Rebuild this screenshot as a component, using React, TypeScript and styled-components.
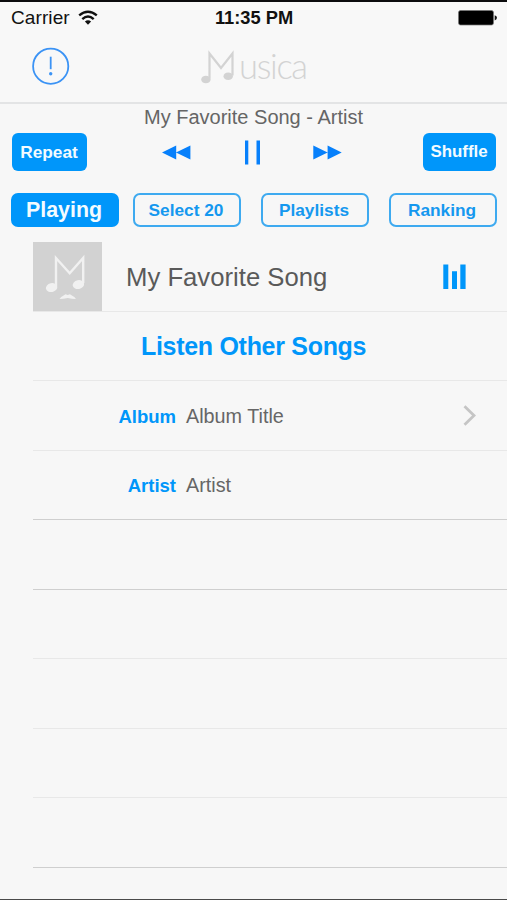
import React from "react";
import styled, { createGlobalStyle } from "styled-components";

const BLUE = "#0096fa";

const GlobalStyle = createGlobalStyle`
  * { box-sizing: border-box; }
  body { margin: 0; background: #f7f7f7; font-family: "Liberation Sans", Arial, sans-serif; }
`;

const Screen = styled.main`
  width: 507px;
  height: 900px;
  display: flex;
  flex-direction: column;
  overflow: hidden;
  background: #f7f7f7;
  border-top: 2px solid #0c0c0e;
  border-bottom: 1px solid #4a4a4a;
`;

const Header = styled.header`
  height: 102px;
  flex: none;
  background: #f8f8f8;
  border-bottom: 2px solid #e3e4e5;
`;

const StatusBar = styled.div`
  height: 32px;
  display: grid;
  grid-template-columns: 1fr 80px 1fr;
  align-items: center;
  padding: 0 10px 0 11px;
  color: #111;
`;

const Carrier = styled.div`
  display: flex;
  align-items: center;
  gap: 8px;
  font-size: 19px;
  letter-spacing: 0.1px;
`;

const Clock = styled.time`
  font-size: 18.3px;
  font-weight: 700;
  white-space: nowrap;
  text-align: center;
`;

const Battery = styled.svg`
  justify-self: end;
`;

const NavBar = styled.div`
  height: 68px;
  display: grid;
  grid-template-columns: 170px 1fr 170px;
  align-items: center;
  padding-left: 31px;
  padding-bottom: 4px;
`;

const InfoButton = styled.button`
  width: 40px;
  height: 40px;
  padding: 0;
  border: 0;
  background: none;
`;

const Brand = styled.h1`
  margin: 0;
  height: 42px;
  display: flex;
  align-items: flex-start;
  color: #d3d3d3;
  font: 300 34.5px/41px Lato, sans-serif;
  letter-spacing: -1.3px;
`;

const Icon = styled.svg`
  display: block;
  flex: none;
`;

const NowPlaying = styled.div`
  height: 29px;
  flex: none;
  line-height: 27px;
  text-align: center;
  font-size: 20px;
  color: #656565;
`;

const Controls = styled.div`
  height: 38px;
  flex: none;
  display: flex;
  align-items: center;
  justify-content: space-between;
  padding: 0 11px 0 12px;
`;

const ModeButton = styled.button<{ $width: number; $size: number }>`
  width: ${(p) => p.$width}px;
  height: 38px;
  padding: 0 1px 0 0;
  border: 0;
  border-radius: 6px;
  background: ${BLUE};
  color: #f3fbff;
  font: 700 ${(p) => p.$size}px/36px "Liberation Sans", Arial, sans-serif;
`;

const Transport = styled.div`
  display: flex;
  align-items: center;
  justify-content: space-between;
  width: 180px;
  margin-right: 6px;
`;

const Tabs = styled.nav`
  height: 34px;
  flex: none;
  display: flex;
  gap: 20px;
  margin: 22px 0 15px 11px;
`;

const Tab = styled.button<{ $active?: boolean }>`
  width: 108px;
  height: 34px;
  padding: 0 2px 0 0;
  border: 2px solid ${(p) => (p.$active ? BLUE : "#3eaaf0")};
  border-radius: 7px;
  margin-right: ${(p) => (p.$active ? -6 : 0)}px;
  background: ${(p) => (p.$active ? BLUE : "transparent")};
  color: ${(p) => (p.$active ? "#f3fbff" : "#1598ef")};
  font: 700 ${(p) => (p.$active ? 21.4 : 17.3)}px/28px "Liberation Sans", Arial, sans-serif;
`;

const List = styled.section`
  margin-left: 33px;
  display: flex;
  flex-direction: column;
`;

const Row = styled.div<{ $strong?: boolean }>`
  height: 69.5px;
  display: flex;
  align-items: center;
  border-bottom: ${(p) => (p.$strong ? "1px solid #cfcfcf" : "1px solid #e8e8e8")};
`;

const SongTitle = styled.span`
  flex: 1;
  margin-left: 24px;
  padding-top: 2px;
  font-size: 25.7px;
  color: #5a5a5a;
`;

const Equalizer = styled(Icon)`
  margin-right: 41px;
`;

const ListenLink = styled.span`
  margin-left: 108px;
  padding-top: 2px;
  font-size: 25px;
  letter-spacing: -0.3px;
  font-weight: 700;
  color: ${BLUE};
`;

const FieldLabel = styled.span`
  width: 143px;
  padding-top: 3px;
  text-align: right;
  font-size: 18.5px;
  font-weight: 700;
  color: ${BLUE};
`;

const FieldValue = styled.span`
  flex: 1;
  margin-left: 10px;
  padding-top: 2px;
  font-size: 19.8px;
  color: #666;
`;

const Chevron = styled(Icon)`
  margin-right: 31px;
`;

export default function App() {
  return (
    <>
      <GlobalStyle />
      <Screen>
        <Header>
          <StatusBar>
            <Carrier>
              Carrier
              <Icon width="20" height="16" viewBox="0 0 20 16">
                <path d="M1.2 5.4Q10-2 18.8 5.4" fill="none" stroke="#111" strokeWidth="2.4" />
                <path d="M4.3 9.1Q10 4 15.7 9.1" fill="none" stroke="#111" strokeWidth="2.4" />
                <path d="M6.9 11.5Q10 8.8 13.1 11.5L10 14.8Z" fill="#111" />
              </Icon>
            </Carrier>
            <Clock>11:35 PM</Clock>
            <Battery width="39" height="16" viewBox="0 0 39 16">
              <rect x="0.5" y="0.5" width="35" height="14.5" rx="2" fill="#000" stroke="#777" strokeWidth="0.7" />
              <path d="M36.7 5.2Q39 6 39 7.8T36.7 10.4Z" fill="#111" />
            </Battery>
          </StatusBar>
          <NavBar>
            <InfoButton aria-label="Information">
              <Icon width="40" height="40" viewBox="0 0 40 40" fill="none" stroke="#3b93f5" strokeWidth="1.8">
                <circle cx="19.7" cy="20.2" r="17.6" />
                <path d="M19.7 10.7V23.2" />
                <circle cx="19.7" cy="27.8" r="1.7" fill="#3b93f5" stroke="none" />
              </Icon>
            </InfoButton>
            <Brand aria-label="Musica">
              <Icon width="38" height="42" viewBox="0 0 38 42" fill="none" stroke="#d3d3d3" strokeWidth="2.2">
                <path d="M8.5 33.5V8.5L20 23L31.5 8.5V30.5" />
                <ellipse cx="4.9" cy="34.5" rx="4.7" ry="3.8" fill="#d3d3d3" stroke="none" />
                <ellipse cx="27.2" cy="31.3" rx="4.7" ry="3.8" fill="#d3d3d3" stroke="none" />
              </Icon>
              usica
            </Brand>
          </NavBar>
        </Header>
        <NowPlaying>My Favorite Song - Artist</NowPlaying>
        <Controls>
          <ModeButton $width={75} $size={17.3}>Repeat</ModeButton>
          <Transport>
            <Icon width="29" height="15" viewBox="0 0 29 15" fill="#0780fb">
              <path d="M0 7.5L14.2 0.5V14.5ZM14 7.5L28.4 0.5V14.5Z" />
            </Icon>
            <Icon width="17" height="25" viewBox="0 0 17 25" fill="#0780fb">
              <path d="M1 0.5H4.3V24.5H1ZM12.5 0.5H16V24.5H12.5Z" />
            </Icon>
            <Icon width="29" height="15" viewBox="0 0 29 15" fill="#0780fb">
              <path d="M0.3 0.5L14.6 7.5L0.3 14.5ZM14.6 0.5L28.7 7.5L14.6 14.5Z" />
            </Icon>
          </Transport>
          <ModeButton $width={73} $size={16.9}>Shuffle</ModeButton>
        </Controls>
        <Tabs>
          <Tab $active>Playing</Tab>
          <Tab>Select 20</Tab>
          <Tab>Playlists</Tab>
          <Tab>Ranking</Tab>
        </Tabs>
        <List>
          <Row>
            <Icon width="69" height="69" viewBox="0 0 69 69">
              <rect width="69" height="69" fill="#d2d2d2" />
              <g fill="none" stroke="#f1f1f1" strokeWidth="2.4">
                <path d="M23 44V16L36.7 31.2L50.2 16V41" />
                <ellipse cx="18.6" cy="45.6" rx="5.8" ry="4.4" fill="#f1f1f1" stroke="none" transform="rotate(-12 18.6 45.6)" />
                <ellipse cx="45.4" cy="42.6" rx="5.8" ry="4.4" fill="#f1f1f1" stroke="none" transform="rotate(-12 45.4 42.6)" />
                <path d="M26.5 57Q28 54.6 32.5 52.2L34.7 53L36.9 52.2Q41.5 54.6 43 57Q39 56.8 34.7 56Q30.5 56.8 26.5 57Z" fill="#f1f1f1" stroke="none" />
              </g>
            </Icon>
            <SongTitle>My Favorite Song</SongTitle>
            <Equalizer width="23" height="25" viewBox="0 0 23 25" fill={BLUE}>
              <path d="M0.3 0.5H5.3V25H0.3ZM9 7.2H14V25H9ZM17.3 0.5H22.6V25H17.3Z" />
            </Equalizer>
          </Row>
          <Row><ListenLink>Listen Other Songs</ListenLink></Row>
          <Row>
            <FieldLabel>Album</FieldLabel>
            <FieldValue>Album Title</FieldValue>
            <Chevron width="13" height="21" viewBox="0 0 13 21">
              <path d="M1.5 1.2L11 10.5L1.5 19.8" fill="none" stroke="#c5c5c5" strokeWidth="2.8" />
            </Chevron>
          </Row>
          <Row $strong>
            <FieldLabel>Artist</FieldLabel>
            <FieldValue>Artist</FieldValue>
          </Row>
          <Row $strong />
          <Row />
          <Row />
          <Row />
          <Row $strong />
        </List>
      </Screen>
    </>
  );
}
